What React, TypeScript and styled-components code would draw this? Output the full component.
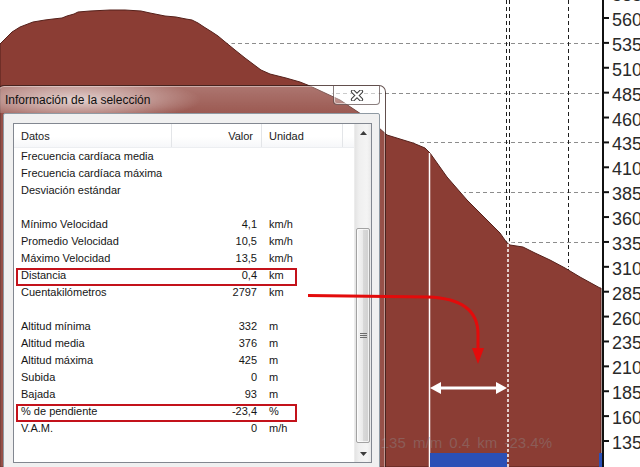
import React from 'react';
import styled, { createGlobalStyle } from 'styled-components';

const GlobalStyle = createGlobalStyle`
  html, body {
    margin: 0;
    padding: 0;
    background: #fff;
    overflow: hidden;
  }
  body {
    font-family: "Liberation Sans", Arial, sans-serif;
  }
`;

const Stage = styled.div`
  position: relative;
  width: 640px;
  height: 467px;
  overflow: hidden;
  background: #fff;
`;

const ChartSvg = styled.svg`
  display: block;
`;

// red pointer drawn over the dialog
const Overlay = styled.svg`
  position: absolute;
  left: 0;
  top: 0;
  pointer-events: none;
`;

// ---- dialog ----
const Window = styled.div`
  position: absolute;
  left: -3px;
  top: 85px;
  width: 389px;
  height: 400px;
  box-sizing: border-box;
  display: flex;
  flex-direction: column;
  border: 1px solid rgba(45, 20, 18, 0.75);
  border-radius: 7px 7px 0 0;
  background: rgba(255, 255, 255, 0.1);
  box-shadow: inset 0 0 0 1px rgba(255, 255, 255, 0.4);
`;

const TitleBar = styled.div`
  height: 27px;
  flex: none;
  display: flex;
  align-items: center;
  padding-left: 7px;
  border-radius: 6px 6px 0 0;
  background:
    radial-gradient(ellipse 125px 22px at 78px 14px, rgba(255, 255, 255, 0.7), rgba(255, 255, 255, 0.3) 60%, rgba(255, 255, 255, 0) 100%),
    linear-gradient(180deg, rgba(255, 255, 255, 0.22), rgba(255, 255, 255, 0.06));
`;

const Title = styled.span`
  font-size: 12px;
  color: #101010;
`;

const CloseButton = styled.div`
  margin-left: auto;
  margin-right: 5px;
  align-self: flex-start;
  width: 47px;
  height: 19px;
  box-sizing: border-box;
  border: 1px solid rgba(60, 40, 40, 0.6);
  border-top: none;
  border-radius: 0 0 4px 4px;
  background: linear-gradient(180deg, rgba(255, 255, 255, 0.5), rgba(255, 255, 255, 0.22));
  box-shadow: inset 0 0 0 1px rgba(255, 255, 255, 0.55);
  display: flex;
  align-items: center;
  justify-content: center;
`;

const Client = styled.div`
  flex: 1;
  margin: 0 5px;
  padding: 9px;
  background: #f0f0f0;
  border: 1px solid #8f9aa3;
  border-radius: 2px 2px 0 0;
`;

const ListView = styled.div`
  width: 359px;
  height: 340px;
  box-sizing: border-box;
  border: 1px solid #828790;
  background: #fff;
  display: flex;
`;

const ListMain = styled.div`
  flex: 1;
  display: flex;
  flex-direction: column;
`;

const cols = '158px 90px 81px 1fr';

const HeaderRow = styled.div`
  height: 24px;
  display: grid;
  grid-template-columns: ${cols};
  background: linear-gradient(180deg, #ffffff 0%, #ffffff 55%, #f6f7f9 100%);
  border-bottom: 1px solid #eceef1;
  box-sizing: border-box;
`;

const HeaderCell = styled.div<{ $align?: 'left' | 'right' }>`
  display: flex;
  align-items: center;
  justify-content: ${(p) => (p.$align === 'right' ? 'flex-end' : 'flex-start')};
  padding: ${(p) => (p.$align === 'right' ? '0 8px 0 0' : '0 0 0 7px')};
  border-right: 1px solid #e3e5e8;
  font-size: 11px;
  color: #1b1b1b;
  &:last-child {
    border-right: none;
  }
`;

const Row = styled.div<{ $marked?: boolean }>`
  position: relative;
  height: 17px;
  display: grid;
  grid-template-columns: ${cols};
  font-size: 11px;
  line-height: 17px;
  color: #161616;
  &::after {
    content: '';
    display: ${(p) => (p.$marked ? 'block' : 'none')};
    position: absolute;
    left: 2px;
    top: 1px;
    width: 281px;
    height: 18px;
    box-sizing: border-box;
    border: 2px solid #c3121b;
  }
`;

const Cell = styled.div<{ $align?: 'left' | 'right' }>`
  white-space: nowrap;
  text-align: ${(p) => p.$align ?? 'left'};
  padding: ${(p) => (p.$align === 'right' ? '0 5px 0 0' : '0 0 0 7px')};
`;

const ScrollBar = styled.div`
  width: 17px;
  flex: none;
  display: flex;
  flex-direction: column;
  background: linear-gradient(90deg, #e4e4e4 0%, #efefef 25%, #f4f4f4 75%, #e9e9e9 100%);
  border-left: 1px solid #ececec;
  box-sizing: border-box;
`;

const ScrollButton = styled.div`
  height: 17px;
  flex: none;
  display: flex;
  align-items: center;
  justify-content: center;
`;

const Thumb = styled.div`
  margin: 87px 1px 0 1px;
  height: 215px;
  box-sizing: border-box;
  border: 1px solid #a2a2a2;
  border-radius: 2px;
  background: linear-gradient(90deg, #f6f6f6 0%, #e9e9e9 50%, #d9d9d9 51%, #d0d0d0 100%);
  box-shadow: inset 0 0 0 1px rgba(255, 255, 255, 0.7);
  display: flex;
  align-items: center;
  justify-content: center;
`;

const TrackRest = styled.div`
  flex: 1;
`;

type Item = { name: string; value?: string; unit?: string; marked?: boolean };

const items: Item[] = [
  { name: 'Frecuencia cardíaca media' },
  { name: 'Frecuencia cardíaca máxima' },
  { name: 'Desviación estándar' },
  { name: '' },
  { name: 'Mínimo Velocidad', value: '4,1', unit: 'km/h' },
  { name: 'Promedio Velocidad', value: '10,5', unit: 'km/h' },
  { name: 'Máximo Velocidad', value: '13,5', unit: 'km/h' },
  { name: 'Distancia', value: '0,4', unit: 'km', marked: true },
  { name: 'Cuentakilómetros', value: '2797', unit: 'km' },
  { name: '' },
  { name: 'Altitud mínima', value: '332', unit: 'm' },
  { name: 'Altitud media', value: '376', unit: 'm' },
  { name: 'Altitud máxima', value: '425', unit: 'm' },
  { name: 'Subida', value: '0', unit: 'm' },
  { name: 'Bajada', value: '93', unit: 'm' },
  { name: '% de pendiente', value: '-23,4', unit: '%', marked: true },
  { name: 'V.A.M.', value: '0', unit: 'm/h' },
];

// ---- chart ----
const yOf = (v: number) => 18 + (560 - v) * 0.9953;

const profile: [number, number][] = [
  [0, 44], [6, 38], [12, 32], [20, 27], [33, 22], [45, 20], [53, 19], [62, 18], [67, 16],
  [74, 14], [78, 12], [90, 11], [110, 10], [125, 10], [141, 11], [150, 13], [155, 14],
  [165, 16], [176, 17], [186, 19], [192, 20], [198, 23], [204, 27], [212, 32], [218, 36],
  [224, 41], [235, 50], [245, 58], [253, 64], [261, 70], [270, 74], [286, 78], [300, 82],
  [310, 86], [340, 100], [370, 120], [387, 135], [400, 139], [413, 143], [425, 148],
  [430, 153], [447, 177], [467, 200], [487, 220], [500, 233], [507, 243], [510, 245],
  [523, 247], [535, 253], [550, 260], [565, 268], [580, 277], [600, 288],
];

const edge = profile.map(([x, y]) => `${x},${y}`).join(' ');
const fillPath = `M${profile.map(([x, y]) => `${x} ${y}`).join(' L')} L601 288 L601 467 L0 467 Z`;

const axisValues = [585, 560, 535, 510, 485, 460, 435, 410, 385, 360, 335, 310, 285, 260, 235, 210, 185, 160, 135];
const gridValues = [535, 485, 435, 385, 335, 285, 235, 185, 135];

const Chart: React.FC = () => (
  <ChartSvg width={640} height={467} viewBox="0 0 640 467">
    {gridValues.map((v) => (
      <line key={v} x1={0} x2={602} y1={Math.round(yOf(v)) + 0.5} y2={Math.round(yOf(v)) + 0.5}
        stroke="#8d8d8d" strokeWidth={1} strokeDasharray="4 3" />
    ))}
    {[506.5, 509.5, 568.5].map((x) => (
      <line key={x} x1={x} x2={x} y1={0} y2={467} stroke="#1e1e1e" strokeWidth={1} strokeDasharray="4 3" />
    ))}

    <polyline points={edge} fill="none" stroke="#ffffff" strokeWidth={2} transform="translate(1 -1.5)" />
    <path d={fillPath} fill="#8b3d34" stroke="#55201a" strokeWidth={1} />

    {/* selection */}
    <line x1={429.5} x2={429.5} y1={153} y2={467} stroke="#fff" strokeWidth={1.5} />
    <line x1={508} x2={508} y1={244} y2={467} stroke="#fff" strokeWidth={1.5} strokeDasharray="3 2" />
    <rect x={430} y={453} width={77} height={14} fill="#2b50b6" />
    <rect x={599} y={453} width={3} height={14} fill="#2b50b6" />

    <text x={552} y={448} textAnchor="end" fontFamily='"Liberation Sans", Arial, sans-serif'
      fontSize={15} wordSpacing={3} fill="#8d7774" opacity={0.55}>-93 m  -135 m/m  0.4 km  -23.4%</text>

    {/* axis */}
    <line x1={603} x2={603} y1={0} y2={467} stroke="#111" strokeWidth={2} />
    {axisValues.map((v) => {
      const y = yOf(v);
      return (
        <g key={v}>
          <line x1={603} x2={609} y1={y} y2={y} stroke="#111" strokeWidth={2} />
          <text x={612} y={y + 8} fontFamily='"Liberation Sans", Arial, sans-serif' fontSize={18} fill="#2a2a2a">{v}</text>
        </g>
      );
    })}

    {/* width arrow */}
    <line x1={438} x2={500} y1={388} y2={388} stroke="#fff" strokeWidth={3} />
    <polygon points="430,388 441,382 441,394" fill="#fff" />
    <polygon points="507,388 496,382 496,394" fill="#fff" />
  </ChartSvg>
);

const Pointer: React.FC = () => (
  <Overlay width={640} height={467} viewBox="0 0 640 467">
    <path d="M308 295.5 L428 297 C458 298 478 308 478 334 L478 350" fill="none" stroke="#e30b0b" strokeWidth={3} />
    <polygon points="472,348 484,348 478,364" fill="#e30b0b" />
  </Overlay>
);

const Triangle: React.FC<{ down?: boolean }> = ({ down }) => (
  <svg width={7} height={4} viewBox="0 0 7 4">
    <polygon points={down ? '0,0 7,0 3.5,4' : '0,4 7,4 3.5,0'} fill="#3c3c3c" />
  </svg>
);

const App: React.FC = () => (
  <Stage>
    <GlobalStyle />
    <Chart />
    <Window>
      <TitleBar>
        <Title>Información de la selección</Title>
        <CloseButton>
          <svg width={14} height={11} viewBox="0 0 14 11">
            <path d="M3 1.5 L11 9.5 M11 1.5 L3 9.5" stroke="#3a3a3a" strokeWidth={4.2} strokeLinecap="round" />
            <path d="M3 1.5 L11 9.5 M11 1.5 L3 9.5" stroke="#fff" strokeWidth={2.2} strokeLinecap="round" />
          </svg>
        </CloseButton>
      </TitleBar>
      <Client>
        <ListView>
          <ListMain>
            <HeaderRow>
              <HeaderCell>Datos</HeaderCell>
              <HeaderCell $align="right">Valor</HeaderCell>
              <HeaderCell>Unidad</HeaderCell>
              <HeaderCell />
            </HeaderRow>
            {items.map((it, i) => (
              <Row key={i} $marked={it.marked}>
                <Cell>{it.name}</Cell>
                <Cell $align="right">{it.value}</Cell>
                <Cell>{it.unit}</Cell>
              </Row>
            ))}
          </ListMain>
          <ScrollBar>
            <ScrollButton><Triangle /></ScrollButton>
            <Thumb>
              <svg width={7} height={7} viewBox="0 0 7 7">
                <path d="M0 1.5 H7 M0 3.5 H7 M0 5.5 H7" stroke="#6d6d6d" strokeWidth={1} />
              </svg>
            </Thumb>
            <TrackRest />
            <ScrollButton><Triangle down /></ScrollButton>
          </ScrollBar>
        </ListView>
      </Client>
    </Window>
    <Pointer />
  </Stage>
);

export default App;
